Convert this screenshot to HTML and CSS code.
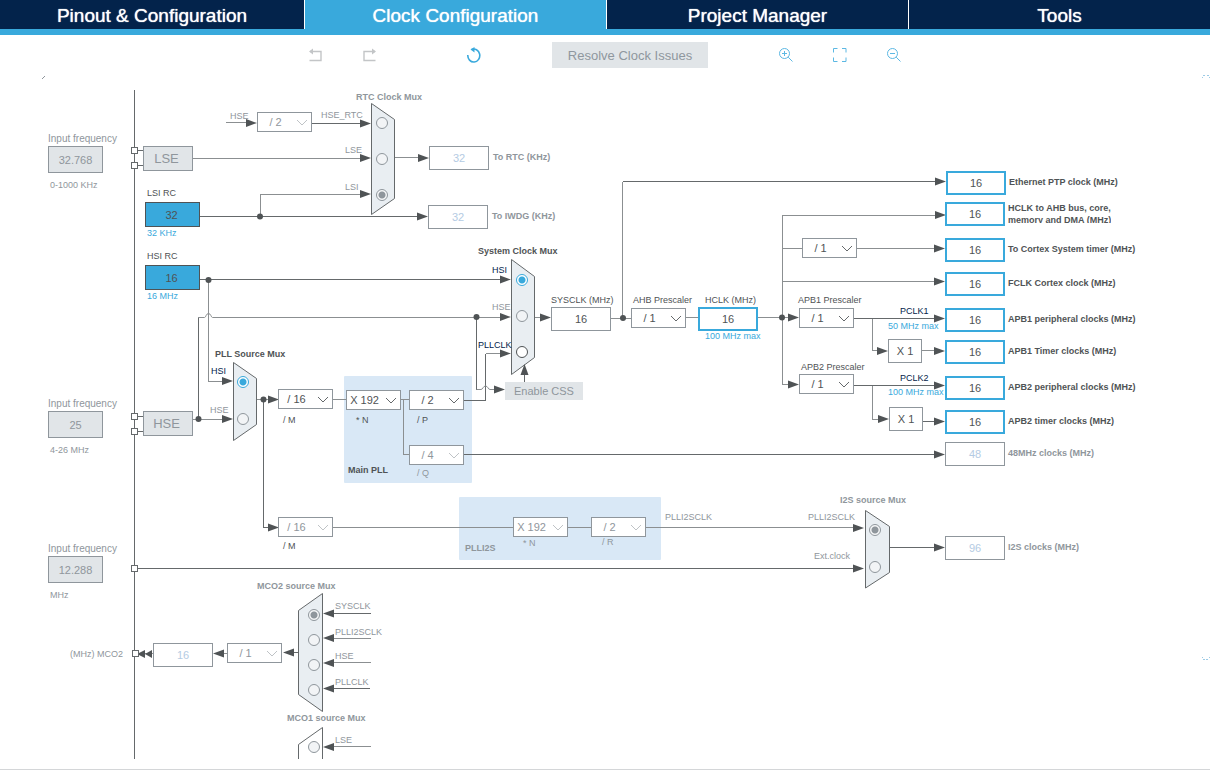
FILE: index.html
```html
<!DOCTYPE html>
<html lang="en">
<head>
<meta charset="utf-8">
<title>Clock Configuration</title>
<link rel="stylesheet" href="styles.css">
</head>
<body>
<nav class="tabs">
  <a class="tab" href="#pinout">Pinout &amp; Configuration</a>
  <a class="tab active" href="#clock" aria-current="page">Clock Configuration</a>
  <a class="tab" href="#project">Project Manager</a>
  <a class="tab" href="#tools">Tools</a>
</nav>

<div class="toolbar">
  <div class="tools history">
    <div class="tools">
      <button class="icon muted" type="button" aria-label="Undo"><svg viewBox="0 0 16 16"><path d="M2 4.500h11v9H1.500" /><path class="solid" d="M1 4.500L5 1.500v6z" /></svg></button>
      <button class="icon muted" type="button" aria-label="Redo"><svg viewBox="0 0 16 16"><path d="M13 4.500H2v9h11.500" /><path class="solid" d="M14 4.500L10 1.500v6z" /></svg></button>
    </div>
    <button class="icon reset" type="button" aria-label="Reset"><svg viewBox="0 0 16 16"><path d="M5.500 2.500A6 6.500 0 1 1 1.800 8" /><path class="solid" d="M4.500 2.500L8.500 0v5.500z" /></svg></button>
  </div>
  <button class="resolve" type="button" disabled>Resolve Clock Issues</button>
  <div class="tools">
    <button class="icon" type="button" aria-label="Zoom in"><svg viewBox="0 0 16 16"><circle cx="6.500" cy="6.500" r="5" /><path d="M10.200 10.200l4.300 4.300M4 6.500h5M6.500 4v5" /></svg></button>
    <button class="icon" type="button" aria-label="Fit to window"><svg viewBox="0 0 16 16"><path d="M1.500 5.500v-4h4M10 1.500h4v4M14 10.500v4h-4M5.500 14.500h-4v-4" /></svg></button>
    <button class="icon" type="button" aria-label="Zoom out"><svg viewBox="0 0 16 16"><circle cx="6.500" cy="6.500" r="5" /><path d="M10.200 10.200l4.300 4.300M4 6.500h5" /></svg></button>
  </div>
</div>

<main class="canvas">
<svg class="wires" width="1210" height="685" viewBox="0 75 1210 685" aria-hidden="true">
  <defs>
    <path id="r" d="M0 0l-11-4v8z" />
    <path id="l" d="M0 0l11-4v8z" />
    <path id="u" d="M0 0l-4 11h8z" />
    <path id="chev" d="M1 1l5 5 5-5" />
    <circle id="dot" r="3" />
    <rect id="pin" x="-3" y="-3" width="6" height="6" />
  </defs>
  <g class="zone">
    <rect x="344" y="376" width="128" height="107" rx="1" />
    <rect x="459" y="497" width="202" height="63" rx="1" />
  </g>
  <g class="wire">
    <path d="M134.500 90V759M134.500 150.500H143M134.500 165.500H143M134.500 416.500H143M134.500 431.500H143" />
    <path d="M312 123.500H365M200 216.500H420M200 279.500H505M134 568.500H858M889 547.500H940M464 454.500H940" />
    <path d="M198.500 419V317.500M263.500 399.500V527.500H272M485.500 353.500V400.500H464M476.500 317V389.500M524.500 382V372" />
    <path d="M622.500 181.500H940M854 318.500H940M854 385.500H940M330 613.500H371M330 688.500H370M923 421.500H940M299 652.500H288" />
  </g>
  <g class="wire light">
    <path d="M226 122.500H252M193 158.500H365M365 194.500H260.500V216M395 157.500H424" />
    <path d="M208.500 280V381.500H227M193 419.500H228M257 399.500H273" />
    <path d="M485.500 353.500H505M535 317.500H546M611 318.500H631M622.500 318V181.500M686 317.500H698M758 317.500H794" />
    <path d="M940 215.500H782.500V384.500H793M782 248.500H802M857 248.500H940M782 281.500H940" />
    <path d="M872.500 318.500V350.500H883M922 350.500H940M872.500 385.500V419.500H884" />
    <path d="M333 399.500H346M401 399.500H409M403.500 399.500V454.500H409" />
    <path d="M333 527.500H513M568 527.500H591M646 527.500H858" />
    <path d="M330 638.500H371M330 662.500H371M330 746.500H371M227 653.500H218M153 653.500H139" />
  </g>
  <g class="wire light curve">
    <path d="M198 317.500H204.500C206 317.500 206 313.500 208.500 313.500S211 317.500 212.500 317.500H505" />
    <path d="M476.500 389.500H481C483 389.500 483 386 485.500 386S488 389.500 490 389.500H497" />
  </g>
  <g class="mux">
    <path d="M371.500 103.500L394.500 119.500V198.500L371.500 214.500z" />
    <path d="M511.500 259.500L534.500 276.500V357.500L511.500 374.500z" />
    <path d="M233.500 362.500L256.500 378.500V424.500L233.500 440.500z" />
    <path d="M865.500 510.500L889.500 526.500V572.500L865.500 588z" />
    <path d="M322.500 593.500L298.500 610.500V694.500L322.500 711.500z" />
    <path class="blank" d="M322.500 727.500L298.500 744.500V828.500L322.500 844.500z" />
  </g>
  <g class="tips">
    <use href="#r" x="257" y="123" /><use href="#r" x="371" y="123.500" /><use href="#r" x="371" y="158" /><use href="#r" x="371" y="194" />
    <use href="#r" x="429" y="158" /><use href="#r" x="428" y="216.500" />
    <use href="#r" x="511" y="279.500" /><use href="#r" x="511" y="317" /><use href="#r" x="511" y="353.500" /><use href="#r" x="505" y="389.500" /><use href="#u" x="524.500" y="364" />
    <use href="#r" x="551" y="317.500" /><use href="#r" x="799" y="317.500" /><use href="#r" x="799" y="384.500" />
    <use href="#r" x="233" y="381" /><use href="#r" x="233" y="419" /><use href="#r" x="279" y="399.500" /><use href="#r" x="279" y="527.500" />
    <use href="#r" x="946" y="181.500" /><use href="#r" x="946" y="215" /><use href="#r" x="945" y="248.500" /><use href="#r" x="945" y="281.500" />
    <use href="#r" x="945" y="318.500" /><use href="#r" x="945" y="351" /><use href="#r" x="945" y="385.500" /><use href="#r" x="945" y="421.500" />
    <use href="#r" x="945" y="454.500" /><use href="#r" x="945" y="547.500" /><use href="#r" x="888" y="351" /><use href="#r" x="889" y="419" />
    <use href="#r" x="864" y="528" /><use href="#r" x="864" y="568.500" />
    <use href="#l" x="323" y="613.500" /><use href="#l" x="323" y="638" /><use href="#l" x="323" y="663" /><use href="#l" x="323" y="688.500" /><use href="#l" x="323" y="747" />
    <use href="#l" x="283" y="652.500" /><use href="#l" x="213" y="653.500" />
    <path d="M137 654l8-4v8zM145 654l7-4v8z" />
    <use href="#dot" x="260" y="216.500" /><use href="#dot" x="208.500" y="280" /><use href="#dot" x="198.500" y="419" /><use href="#dot" x="263.500" y="399.500" />
    <use href="#dot" x="476.500" y="317" /><use href="#dot" x="623" y="318" /><use href="#dot" x="782" y="317.500" />
  </g>
  <g class="pins">
    <use href="#pin" x="134.500" y="150.500" /><use href="#pin" x="134.500" y="165.500" /><use href="#pin" x="134.500" y="416.500" /><use href="#pin" x="134.500" y="431.500" />
    <use href="#pin" x="134.500" y="568.500" /><use href="#pin" x="135.500" y="653.500" />
  </g>
  <path class="speck" d="M42 78.500h1M43 77.500h1M44 76.500h1" />
  <path class="speck blue" d="M1202 77.500h1M1203 75.500h2M1207 75.500h2M1209 77.500h1M1202 657.500h1M1203 659.500h2M1206 659.500h2M1209 657.500h1" />
</svg>

<div class="node source n-lse-in"><label for="f-lse">Input frequency</label><input id="f-lse" class="field pad" value="32.768"><span>0-1000 KHz</span></div>
<div class="node source n-hse-in"><label for="f-hse">Input frequency</label><input id="f-hse" class="field pad" value="25"><span>4-26 MHz</span></div>
<div class="node source n-ext-in"><label for="f-ext">Input frequency</label><input id="f-ext" class="field pad" value="12.288"><span>MHz</span></div>
<button type="button" class="node osc n-lse">LSE</button>
<button type="button" class="node osc n-hse">HSE</button>
<div class="node rc n-lsi-rc"><label for="f-lsi">LSI RC</label><input id="f-lsi" class="field" value="32" readonly><span>32 KHz</span></div>
<div class="node rc n-hsi-rc"><label for="f-hsi">HSI RC</label><input id="f-hsi" class="field" value="16" readonly><span>16 MHz</span></div>

<label class="node off n-rtc-hse" for="s-rtc">HSE</label>
<div class="node pick off n-rtc-div"><select id="s-rtc"><option>/ 2</option></select><svg viewBox="0 0 12 7"><use href="#chev" /></svg></div>
<div class="node title off n-rtc-title" id="t-rtc">RTC Clock Mux</div>
<div role="radiogroup" aria-labelledby="t-rtc">
  <label class="node off n-rtc-a" for="rtc-a">HSE_RTC</label><input class="node off n-rtc-ra" type="radio" name="rtc" id="rtc-a">
  <label class="node off n-rtc-b" for="rtc-b">LSE</label><input class="node off n-rtc-rb" type="radio" name="rtc" id="rtc-b">
  <label class="node off n-rtc-c" for="rtc-c">LSI</label><input class="node off n-rtc-rc" type="radio" name="rtc" id="rtc-c" checked>
</div>
<div class="node out off wide n-to-rtc"><input id="o-rtc" class="field" value="32" readonly><label for="o-rtc">To RTC (KHz)</label></div>
<div class="node out off wide n-to-iwdg"><input id="o-iwdg" class="field" value="32" readonly><label for="o-iwdg">To IWDG (KHz)</label></div>

<div class="node title n-sys-title" id="t-sys">System Clock Mux</div>
<div role="radiogroup" aria-labelledby="t-sys">
  <label class="node navy n-sys-a" for="sys-a">HSI</label><input class="node n-sys-ra" type="radio" name="sys" id="sys-a" checked>
  <label class="node off n-sys-b" for="sys-b">HSE</label><input class="node off n-sys-rb" type="radio" name="sys" id="sys-b">
  <label class="node navy n-sys-c" for="sys-c">PLLCLK</label><input class="node n-sys-rc" type="radio" name="sys" id="sys-c">
</div>
<button type="button" class="node css n-css" disabled>Enable CSS</button>

<div class="node title n-pll-title" id="t-pll">PLL Source Mux</div>
<div role="radiogroup" aria-labelledby="t-pll">
  <label class="node navy n-pll-a" for="pll-a">HSI</label><input class="node n-pll-ra" type="radio" name="pll" id="pll-a" checked>
  <label class="node off n-pll-b" for="pll-b">HSE</label><input class="node off n-pll-rb" type="radio" name="pll" id="pll-b">
</div>
<div class="node pick n-m"><select id="s-m"><option>/ 16</option></select><svg viewBox="0 0 12 7"><use href="#chev" /></svg></div><label class="node n-m-l" for="s-m">/ M</label>
<div class="node pick n-n"><select id="s-n"><option>X 192</option></select><svg viewBox="0 0 12 7"><use href="#chev" /></svg></div><label class="node n-n-l" for="s-n">* N</label>
<div class="node pick n-p"><select id="s-p"><option>/ 2</option></select><svg viewBox="0 0 12 7"><use href="#chev" /></svg></div><label class="node n-p-l" for="s-p">/ P</label>
<div class="node pick off n-q"><select id="s-q"><option>/ 4</option></select><svg viewBox="0 0 12 7"><use href="#chev" /></svg></div><label class="node off n-q-l" for="s-q">/ Q</label>
<div class="node title n-main-title">Main PLL</div>
<div class="node pick off n-m2"><select id="s-m2"><option>/ 16</option></select><svg viewBox="0 0 12 7"><use href="#chev" /></svg></div><label class="node n-m2-l" for="s-m2">/ M</label>
<div class="node pick off n-n2"><select id="s-n2"><option>X 192</option></select><svg viewBox="0 0 12 7"><use href="#chev" /></svg></div><label class="node off n-n2-l" for="s-n2">* N</label>
<div class="node pick off n-r2"><select id="s-r2"><option>/ 2</option></select><svg viewBox="0 0 12 7"><use href="#chev" /></svg></div><label class="node off n-r2-l" for="s-r2">/ R</label>
<div class="node title off n-i2s-zone">PLLI2S</div>
<div class="node off n-i2s-out">PLLI2SCLK</div>

<label class="node n-sysclk-l" for="o-sys">SYSCLK (MHz)</label><input class="node field plain n-sysclk" id="o-sys" value="16" readonly>
<label class="node n-ahb-l" for="s-ahb">AHB Prescaler</label>
<div class="node pick n-ahb"><select id="s-ahb"><option>/ 1</option></select><svg viewBox="0 0 12 7"><use href="#chev" /></svg></div>
<label class="node n-hclk-l" for="o-hclk">HCLK (MHz)</label><input class="node field plain live n-hclk" id="o-hclk" value="16">
<div class="node blue n-hclk-max">100 MHz max</div>
<div class="node pick n-ctx"><select aria-label="Cortex prescaler"><option>/ 1</option></select><svg viewBox="0 0 12 7"><use href="#chev" /></svg></div>
<label class="node n-apb1-l" for="s-apb1">APB1 Prescaler</label>
<div class="node pick n-apb1"><select id="s-apb1"><option>/ 1</option></select><svg viewBox="0 0 12 7"><use href="#chev" /></svg></div>
<div class="node navy n-pclk1">PCLK1</div><div class="node blue n-pclk1-max">50 MHz max</div>
<input class="node field times n-x1" value="X 1" aria-label="APB1 timer multiplier" readonly>
<label class="node n-apb2-l" for="s-apb2">APB2 Prescaler</label>
<div class="node pick n-apb2"><select id="s-apb2"><option>/ 1</option></select><svg viewBox="0 0 12 7"><use href="#chev" /></svg></div>
<div class="node navy n-pclk2">PCLK2</div><div class="node blue n-pclk2-max">100 MHz max</div>
<input class="node field times n-x2" value="X 1" aria-label="APB2 timer multiplier" readonly>

<div class="node out n-eth"><input id="o1" class="field live" value="16"><label for="o1">Ethernet PTP clock (MHz)</label></div>
<div class="node out n-dma"><input id="o2" class="field live" value="16"><label class="two" for="o2">HCLK to AHB bus, core,<br>memory and DMA (MHz)</label></div>
<div class="node out n-tim"><input id="o3" class="field live" value="16"><label for="o3">To Cortex System timer (MHz)</label></div>
<div class="node out n-fclk"><input id="o4" class="field live" value="16"><label for="o4">FCLK Cortex clock (MHz)</label></div>
<div class="node out n-p1"><input id="o5" class="field live" value="16"><label for="o5">APB1 peripheral clocks (MHz)</label></div>
<div class="node out n-t1"><input id="o6" class="field live" value="16"><label for="o6">APB1 Timer clocks (MHz)</label></div>
<div class="node out n-p2"><input id="o7" class="field live" value="16"><label for="o7">APB2 peripheral clocks (MHz)</label></div>
<div class="node out n-t2"><input id="o8" class="field live" value="16"><label for="o8">APB2 timer clocks (MHz)</label></div>
<div class="node out off n-48"><input id="o9" class="field" value="48" readonly><label for="o9">48MHz clocks (MHz)</label></div>
<div class="node out off n-i2s"><input id="o10" class="field" value="96" readonly><label for="o10">I2S clocks (MHz)</label></div>

<div class="node title off n-i2s-title" id="t-i2s">I2S source Mux</div>
<div role="radiogroup" aria-labelledby="t-i2s">
  <label class="node off n-i2s-a" for="i2s-a">PLLI2SCLK</label><input class="node off n-i2s-ra" type="radio" name="i2s" id="i2s-a" checked>
  <label class="node off n-i2s-b" for="i2s-b">Ext.clock</label><input class="node off n-i2s-rb" type="radio" name="i2s" id="i2s-b">
</div>

<div class="node title off n-mco2-title" id="t-mco2">MCO2 source Mux</div>
<div role="radiogroup" aria-labelledby="t-mco2">
  <label class="node off n-mco-a" for="mco-a">SYSCLK</label><input class="node off n-mco-ra" type="radio" name="mco2" id="mco-a" checked>
  <label class="node off n-mco-b" for="mco-b">PLLI2SCLK</label><input class="node off n-mco-rb" type="radio" name="mco2" id="mco-b">
  <label class="node off n-mco-c" for="mco-c">HSE</label><input class="node off n-mco-rc" type="radio" name="mco2" id="mco-c">
  <label class="node off n-mco-d" for="mco-d">PLLCLK</label><input class="node off n-mco-rd" type="radio" name="mco2" id="mco-d">
</div>
<div class="node pick off n-mco-div"><select aria-label="MCO2 prescaler"><option>/ 1</option></select><svg viewBox="0 0 12 7"><use href="#chev" /></svg></div>
<input class="node field plain off n-mco-out" id="o-mco" value="16" readonly><label class="node off n-mco-l" for="o-mco">(MHz) MCO2</label>
<div class="node title off n-mco1-title" id="t-mco1">MCO1 source Mux</div>
<div role="radiogroup" aria-labelledby="t-mco1">
  <label class="node off n-mco1-a" for="mco1-a">LSE</label><input class="node off n-mco1-ra" type="radio" name="mco1" id="mco1-a">
</div>
</main>
</body>
</html>
```
FILE: styles.css
```css
:root {
  --navy: #03234b;
  --blue: #39a9dc;
  --ink: #4f5355;
  --gray: #8f969c;
  --panel: #e1e5e8;
}
* { box-sizing: border-box; }
body {
  margin: 0;
  min-height: 100vh;
  display: flex;
  flex-direction: column;
  background: #fff;
  color: var(--ink);
  font-family: "Liberation Sans", Arial, sans-serif;
  font-size: 9px;
  border-bottom: 1px solid #d4d6d8;
}
button, input, select { font: inherit; color: inherit; margin: 0; padding: 0; border-radius: 0; }

.tabs {
  display: grid;
  grid-template-columns: 305fr 302fr 302fr 301fr;
  border-bottom: 6px solid var(--blue);
}
.tab {
  background: var(--navy);
  color: #fff;
  font-size: 19px;
  line-height: 29px;
  padding-top: 1px;
  height: 29px;
  text-align: center;
  text-decoration: none;
  text-shadow: 0 0 1px #fff;
  border-right: 1px solid #fff;
}
.tab:last-child { border-right: 0; }
.tab.active { background: var(--blue); }

.toolbar {
  display: flex;
  justify-content: center;
  align-items: center;
  gap: 70px;
  height: 40px;
}
.tools { display: flex; gap: 38px; }
.history { gap: 88px; }
.icon { width: 16px; height: 16px; border: 0; background: none; color: #5cb8e3; }
.icon svg { display: block; width: 16px; height: 16px; fill: none; stroke: currentColor; stroke-width: 1; }
.icon.muted { color: #c3c5c7; }
.icon.muted svg { stroke-width: 1.4; }
.icon.reset { color: var(--blue); }
.icon.reset svg { stroke-width: 1.6; }
.icon .solid { fill: currentColor; stroke: none; }
.resolve {
  width: 156px;
  height: 26px;
  border: 0;
  background: var(--panel);
  color: #8f979e;
  font-size: 13px;
}

.canvas { position: relative; flex: 1; overflow: hidden; min-height: 684px; margin-bottom: 10px; }
.wires { display: block; position: absolute; top: 0; left: 0; }
.wire { fill: none; stroke: #65696b; shape-rendering: crispEdges; }
.light { stroke: #8b8f91; }
.curve { shape-rendering: auto; }
.zone { fill: #d9e8f6; }
.mux { fill: #e9eef2; stroke: #65696b; }
.blank { fill: #fff; }
.tips { fill: #4f5355; }
.pins { fill: #fff; stroke: #65696b; }
.speck { stroke: #8f969c; shape-rendering: crispEdges; }
.speck.blue { stroke: #9ccbe6; }

.node { position: absolute; line-height: 12px; white-space: nowrap; }
.title { font-weight: bold; }
.off { color: var(--gray); }
.navy { color: var(--navy); }
.blue { color: var(--blue); }

.field { width: 60px; height: 24px; border: 1px solid var(--gray); background: #fff; text-align: center; font-size: 11px; font-weight: normal; color: var(--ink); }
.live { border: 2px solid var(--blue); }
.off .field, .field.off { color: #b4cbe3; }
.times { width: 34px; }

.source { display: flex; flex-direction: column; color: var(--gray); }
.source label { line-height: 14px; font-size: 10px; }
.source span { line-height: 11px; margin-top: 7px; padding-left: 2px; }
.source .pad { width: 55px; height: 27px; background: var(--panel); color: var(--gray); }
.osc { width: 50px; height: 25px; border: 1px solid var(--gray); background: var(--panel); color: var(--gray); font-size: 13px; padding-right: 3px; }
.rc { display: flex; flex-direction: column; }
.rc label { line-height: 14px; padding: 0 2px; margin-bottom: 2px; }
.rc .field { width: 55px; height: 25px; background: var(--blue); border-color: var(--ink); padding-right: 2px; }
.rc span { line-height: 13px; color: var(--blue); padding-left: 2px; }
.css { width: 78px; height: 18px; border: 0; background: var(--panel); color: var(--gray); font-size: 11px; }

.out { display: flex; align-items: flex-start; gap: 3px; font-weight: bold; }
.out label { line-height: 22px; }
.out .two { line-height: 12px; height: 21px; overflow: hidden; }
.out.wide { gap: 4px; }

.pick { width: 55px; height: 20px; }
.pick select {
  appearance: none;
  display: block;
  width: 55px;
  height: 20px;
  border: 1px solid var(--gray);
  background: #fff;
  padding-right: 18px;
  font-size: 11px;
  text-align: center;
  text-align-last: center;
}
.pick svg { position: absolute; right: 4px; top: 7px; width: 12px; height: 7px; fill: none; stroke: #65696b; pointer-events: none; }
.pick.off svg { stroke: #bfc3c6; }

input[type="radio"] { appearance: none; width: 12px; height: 12px; border: 1px solid var(--ink); border-radius: 50%; background: #fff; }
input[type="radio"]:checked { border-color: var(--blue); background: radial-gradient(circle, var(--blue) 3px, #fff 4px); }
input[type="radio"].off { border-color: var(--gray); background: #f2f4f6; }
input[type="radio"].off:checked { background: radial-gradient(circle, var(--gray) 3px, #f6f7f8 4px); }

/* Board coordinates */
.n-lse-in { left: 48px; top: 57px; }
.n-hse-in { left: 48px; top: 322px; }
.n-ext-in { left: 48px; top: 467px; }
.n-lse { left: 143px; top: 71px; }
.n-hse { left: 143px; top: 336px; }
.n-lsi-rc { left: 145px; top: 111px; }
.n-hsi-rc { left: 145px; top: 174px; }

.n-rtc-hse { left: 230px; top: 35px; }
.n-rtc-div { left: 257px; top: 37px; }
.n-rtc-title { left: 356px; top: 16px; }
.n-rtc-a { left: 321px; top: 34px; }
.n-rtc-b { left: 345px; top: 69px; }
.n-rtc-c { left: 345px; top: 106px; }
.n-rtc-ra { left: 376px; top: 42px; }
.n-rtc-rb { left: 376px; top: 78px; }
.n-rtc-rc { left: 376px; top: 114px; }
.n-to-rtc { left: 429px; top: 71px; }
.n-to-iwdg { left: 428px; top: 130px; }

.n-sys-title { left: 478px; top: 170px; }
.n-sys-a { left: 492px; top: 189px; }
.n-sys-b { left: 492px; top: 226px; }
.n-sys-c { left: 478px; top: 264px; }
.n-sys-ra { left: 516px; top: 199px; }
.n-sys-rb { left: 516px; top: 235px; }
.n-sys-rc { left: 516px; top: 271px; }
.n-css { left: 505px; top: 307px; }

.n-pll-title { left: 215px; top: 273px; }
.n-pll-a { left: 211px; top: 290px; }
.n-pll-b { left: 210px; top: 329px; }
.n-pll-ra { left: 237px; top: 301px; }
.n-pll-rb { left: 237px; top: 338px; }

.n-m { left: 278px; top: 314px; }
.n-m-l { left: 283px; top: 339px; }
.n-n { left: 346px; top: 315px; }
.n-n-l { left: 356px; top: 339px; }
.n-p { left: 409px; top: 315px; }
.n-p-l { left: 417px; top: 339px; }
.n-q { left: 409px; top: 370px; }
.n-q-l { left: 417px; top: 392px; }
.n-main-title { left: 348px; top: 389px; }
.n-m2 { left: 278px; top: 442px; }
.n-m2-l { left: 283px; top: 465px; }
.n-n2 { left: 513px; top: 442px; }
.n-n2-l { left: 523px; top: 462px; }
.n-r2 { left: 591px; top: 442px; }
.n-r2-l { left: 602px; top: 461px; }
.n-i2s-zone { left: 465px; top: 467px; }
.n-i2s-out { left: 665px; top: 436px; }

.n-sysclk-l { left: 551px; top: 219px; }
.n-sysclk { left: 551px; top: 232px; }
.n-ahb-l { left: 633px; top: 219px; }
.n-ahb { left: 631px; top: 233px; }
.n-hclk-l { left: 705px; top: 219px; }
.n-hclk { left: 698px; top: 232px; }
.n-hclk-max { left: 705px; top: 255px; }
.n-ctx { left: 802px; top: 163px; }
.n-apb1-l { left: 798px; top: 219px; }
.n-apb1 { left: 799px; top: 233px; }
.n-pclk1 { left: 900px; top: 230px; }
.n-pclk1-max { left: 888px; top: 245px; }
.n-x1 { left: 888px; top: 264px; }
.n-apb2-l { left: 801px; top: 286px; }
.n-apb2 { left: 799px; top: 299px; }
.n-pclk2 { left: 900px; top: 297px; }
.n-pclk2-max { left: 888px; top: 311px; }
.n-x2 { left: 889px; top: 332px; }

.n-eth { left: 946px; top: 96px; }
.n-dma { left: 945px; top: 127px; }
.n-tim { left: 945px; top: 163px; }
.n-fclk { left: 945px; top: 197px; }
.n-p1 { left: 945px; top: 233px; }
.n-t1 { left: 945px; top: 265px; }
.n-p2 { left: 945px; top: 301px; }
.n-t2 { left: 945px; top: 335px; }
.n-48 { left: 945px; top: 367px; }
.n-i2s { left: 945px; top: 461px; }

.n-i2s-title { left: 840px; top: 419px; }
.n-i2s-a { left: 808px; top: 436px; }
.n-i2s-b { left: 814px; top: 475px; }
.n-i2s-ra { left: 869px; top: 449px; }
.n-i2s-rb { left: 869px; top: 486px; }

.n-mco2-title { left: 257px; top: 505px; }
.n-mco-a { left: 335px; top: 525px; }
.n-mco-b { left: 335px; top: 551px; }
.n-mco-c { left: 335px; top: 575px; }
.n-mco-d { left: 335px; top: 601px; }
.n-mco-ra { left: 308px; top: 534px; }
.n-mco-rb { left: 308px; top: 559px; }
.n-mco-rc { left: 308px; top: 584px; }
.n-mco-rd { left: 308px; top: 609px; }
.n-mco-div { left: 227px; top: 568px; }
.n-mco-out { left: 153px; top: 568px; }
.n-mco-l { left: 70px; top: 573px; }
.n-mco1-title { left: 287px; top: 637px; }
.n-mco1-a { left: 335px; top: 659px; }
.n-mco1-ra { left: 308px; top: 666px; }
```
